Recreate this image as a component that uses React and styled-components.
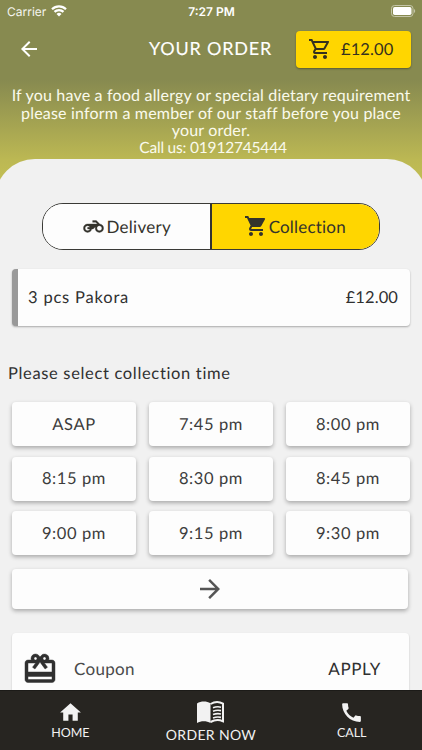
import React from 'react'
import styled, { createGlobalStyle } from 'styled-components'
import {
  MdArrowBack,
  MdArrowForward,
  MdCall,
  MdHome,
  MdOutlineShoppingCart,
  MdRedeem,
  MdShoppingCart,
} from 'react-icons/md'

const GlobalStyle = createGlobalStyle`
  * {
    box-sizing: border-box;
  }
  body {
    margin: 0;
    overflow: hidden;
    font-family: Lato, "Liberation Sans", sans-serif;
    text-rendering: geometricPrecision;
  }
  svg {
    display: block;
    flex-shrink: 0;
  }
`

const Screen = styled.div`
  width: 422px;
  height: 750px;
  display: flex;
  flex-direction: column;
  overflow: hidden;
  background: linear-gradient(#878a50 0, #878a50 80px, #bcb853 160px, #c5c154 190px);
`
const StatusBar = styled.div`
  height: 22px;
  padding: 0 6px 0 7px;
  display: grid;
  grid-template-columns: 1fr auto 1fr;
  align-items: center;
  color: #fff;
  font-family: Inter, sans-serif;
`
const Carrier = styled.div`
  display: flex;
  align-items: center;
  gap: 5px;
  font-size: 12px;
  color: #f4f4ee;
`
const Clock = styled.div`
  font-size: 12px;
  font-weight: 600;
`
const Battery = styled.svg`
  justify-self: end;
`
const Header = styled.div`
  height: 58px;
  padding: 9px 11px 0 17px;
  display: flex;
  align-items: flex-start;
  color: #fff;
`
const BackButton = styled.div`
  width: 24px;
  height: 36px;
  display: flex;
  align-items: center;
`
const Title = styled.div`
  margin-left: 108px;
  width: 147px;
  line-height: 34px;
  font-size: 18px;
  letter-spacing: 0.8px;
  white-space: nowrap;
  -webkit-text-stroke: 0.1px;
`
const BasketButton = styled.div`
  width: 115px;
  height: 37px;
  padding: 0 0 1px 12px;
  display: flex;
  align-items: center;
  gap: 9px;
  border-radius: 4px;
  background: #ffd600;
  box-shadow: 0 1px 2px rgba(0, 0, 0, 0.35);
  color: #34311f;
  font-size: 16.5px;
  letter-spacing: 0.1px;
`
const Notice = styled.div`
  height: 79px;
  padding-top: 7px;
  line-height: 17.6px;
  font-size: 16px;
  letter-spacing: 0.19px;
  text-align: center;
  white-space: nowrap;
  color: #fafaec;
`
const PhoneLine = styled.div`
  padding-left: 4px;
  font-size: 15.5px;
  letter-spacing: -0.2px;
`
const Body = styled.div`
  flex: 1;
  min-height: 0;
  margin: 0 -5px;
  padding: 44px 17px 0;
  display: flex;
  flex-direction: column;
  overflow: hidden;
  border-radius: 40px 40px 0 0;
  background: #f1f1f1;
`
const Toggle = styled.div`
  width: 338px;
  height: 47px;
  margin-left: 30px;
  flex-shrink: 0;
  display: flex;
  border: 1px solid #3a3a36;
  border-radius: 21px;
  overflow: hidden;
`
const ToggleOption = styled.div`
  width: ${(props) => (props.$active ? '168px' : '169px')};
  padding: ${(props) => (props.$active ? '0 1px 1px 0' : '0 0 1px 2px')};
  display: flex;
  align-items: center;
  justify-content: center;
  gap: ${(props) => (props.$active ? '1px' : '2px')};
  border-right: ${(props) => (props.$active ? 'none' : '2px solid #333')};
  background: ${(props) => (props.$active ? '#ffd600' : '#fdfdfd')};
  color: #34332c;
  font-size: 17px;
  letter-spacing: ${(props) => (props.$active ? '0.2px' : '0.3px')};
`
const Card = styled.div`
  flex-shrink: 0;
  border-radius: 4px;
  background: #fdfdfd;
  box-shadow: 0 2px 4px rgba(0, 0, 0, 0.3);
  color: #3c3c3c;
`
const OrderItem = styled(Card)`
  height: 57px;
  width: 398px;
  margin-top: 19px;
  padding: 0 12px 1px 10px;
  display: flex;
  align-items: center;
  justify-content: space-between;
  border-left: 6px solid #999;
  box-shadow: 0 1px 2px rgba(0, 0, 0, 0.3);
  color: #303030;
  font-size: 16.5px;
  letter-spacing: 0.8px;
`
const Price = styled.div`
  letter-spacing: 0.1px;
`
const SectionTitle = styled.div`
  margin: 35px 0 0 -4px;
  line-height: 24px;
  font-size: 16.5px;
  letter-spacing: 0.66px;
  color: #303030;
`
const Slots = styled.div`
  margin-top: 17px;
  display: grid;
  grid-template-columns: repeat(3, 124px);
  grid-auto-rows: 44px;
  column-gap: 13px;
  row-gap: 10.5px;
`
const Slot = styled(Card)`
  padding-bottom: 1px;
  display: flex;
  align-items: center;
  justify-content: center;
  font-size: 16.5px;
  letter-spacing: 0.6px;
`
const MoreSlots = styled(Card)`
  width: 396px;
  height: 40px;
  margin-top: 14px;
  display: flex;
  align-items: center;
  justify-content: center;
  color: #555;
`
const Coupon = styled(Card)`
  width: 397px;
  height: 74px;
  margin-top: 24px;
  padding: 0 28px 3px 10px;
  display: flex;
  align-items: center;
  box-shadow: 0 1px 2px rgba(0, 0, 0, 0.2);
  font-size: 17px;
  letter-spacing: 0.6px;
  color: #303030;
`
const GiftIcon = styled(MdRedeem)`
  path {
    stroke-width: 0.3;
  }
  path:first-child {
    stroke: none;
  }
`
const CouponLabel = styled.div`
  flex: 1;
  margin-left: 16px;
  letter-spacing: 0.3px;
  color: #4a4a4a;
`
const NavBar = styled.div`
  height: 60px;
  flex-shrink: 0;
  display: grid;
  grid-template-columns: repeat(3, 1fr);
  border-top: 1px solid #1c1b18;
  background: #272521;
  color: #f2f2f2;
`
const NavItem = styled.div`
  padding-top: ${(props) => (props.$large ? '7px' : '9px')};
  display: flex;
  flex-direction: column;
  align-items: center;
  font-size: ${(props) => (props.$large ? '14px' : '12.5px')};
  letter-spacing: ${(props) => (props.$large ? '0.35px' : '-0.1px')};
  line-height: 16px;
`

const slots = ['ASAP', '7:45 pm', '8:00 pm', '8:15 pm', '8:30 pm', '8:45 pm', '9:00 pm', '9:15 pm', '9:30 pm']

const Motorcycle = () => (
  <svg width="21" height="21" viewBox="-0.5 -0.5 25 25" fill="currentColor" stroke="currentColor" strokeWidth="0.4">
    <path d="M19.44 9.03L15.41 5H11v2h3.59l2 2H5c-2.8 0-5 2.2-5 5s2.2 5 5 5c2.46 0 4.45-1.69 4.9-4h1.65l2.77-2.77c-.21.54-.32 1.14-.32 1.77 0 2.8 2.2 5 5 5s5-2.2 5-5c0-2.65-1.97-4.77-4.56-4.97zM7.82 15C7.4 16.15 6.28 17 5 17c-1.63 0-3-1.37-3-3s1.37-3 3-3c1.28 0 2.4.85 2.82 2H5v2h2.82zM19 17c-1.66 0-3-1.34-3-3s1.34-3 3-3 3 1.34 3 3-1.34 3-3 3z" />
  </svg>
)

// open menu: solid left page, lines of text on the right one
const MenuBook = () => (
  <svg width="29" height="29" viewBox="0 0 29 29" fill="none">
    <path d="M1 5.5C5 3 10.5 3 14.5 5.3V25C10.5 22.8 5 22.8 1 25z" fill="#f2f2f2" />
    <path d="M14.5 6C18.5 3.7 23.5 3.7 27 5.7V23.3C23.5 21.7 18.5 21.8 14.5 24" stroke="#f2f2f2" strokeWidth="2" />
    <path d="M17 9.8q4-1.6 8-.6M17 13.2q4-1.6 8-.6M17 16.6q4-1.6 8-.6M17 20q4-1.6 8-.6" stroke="#f2f2f2" strokeWidth="1.6" />
  </svg>
)

export default function App() {
  return (
    <Screen>
      <GlobalStyle />
      <StatusBar>
        <Carrier>
          Carrier
          <svg width="16" height="12" viewBox="0 0 16 12" fill="none" stroke="#fff" strokeWidth="2.2">
            <path d="M1 4.2a10 10 0 0 1 14 0M3.5 6.9a6.4 6.4 0 0 1 9 0" />
            <path d="M5.5 9a3.6 3.6 0 0 1 5 0L8 11.6z" fill="#fff" stroke="none" />
          </svg>
        </Carrier>
        <Clock>7:27 PM</Clock>
        <Battery width="25" height="12" viewBox="0 0 25 12">
          <rect x="0.5" y="0.5" width="21.5" height="11" rx="3" fill="none" stroke="#c4c5a8" />
          <rect x="2" y="2" width="18.5" height="8" rx="1.7" fill="#fff" />
          <path d="M23 4v4c1.6-.5 1.6-3.5 0-4z" fill="#c4c5a8" />
        </Battery>
      </StatusBar>
      <Header>
        <BackButton>
          <MdArrowBack size={24} />
        </BackButton>
        <Title>YOUR ORDER</Title>
        <BasketButton>
          <MdOutlineShoppingCart size={24} />
          £12.00
        </BasketButton>
      </Header>
      <Notice>
        If you have a food allergy or special dietary requirement
        <br />
        please inform a member of our staff before you place
        <br />
        your order.
        <PhoneLine>Call us: 01912745444</PhoneLine>
      </Notice>
      <Body>
        <Toggle>
          <ToggleOption>
            <Motorcycle />
            Delivery
          </ToggleOption>
          <ToggleOption $active>
            <MdShoppingCart size={24} />
            Collection
          </ToggleOption>
        </Toggle>
        <OrderItem>
          3 pcs Pakora
          <Price>£12.00</Price>
        </OrderItem>
        <SectionTitle>Please select collection time</SectionTitle>
        <Slots>
          {slots.map((slot) => (
            <Slot key={slot}>{slot}</Slot>
          ))}
        </Slots>
        <MoreSlots>
          <MdArrowForward size={30} />
        </MoreSlots>
        <Coupon>
          <GiftIcon size={36} stroke="currentColor" />
          <CouponLabel>Coupon</CouponLabel>
          APPLY
        </Coupon>
      </Body>
      <NavBar>
        <NavItem>
          <MdHome size={25} />
          HOME
        </NavItem>
        <NavItem $large>
          <MenuBook />
          ORDER NOW
        </NavItem>
        <NavItem>
          <MdCall size={25} />
          CALL
        </NavItem>
      </NavBar>
    </Screen>
  )
}
